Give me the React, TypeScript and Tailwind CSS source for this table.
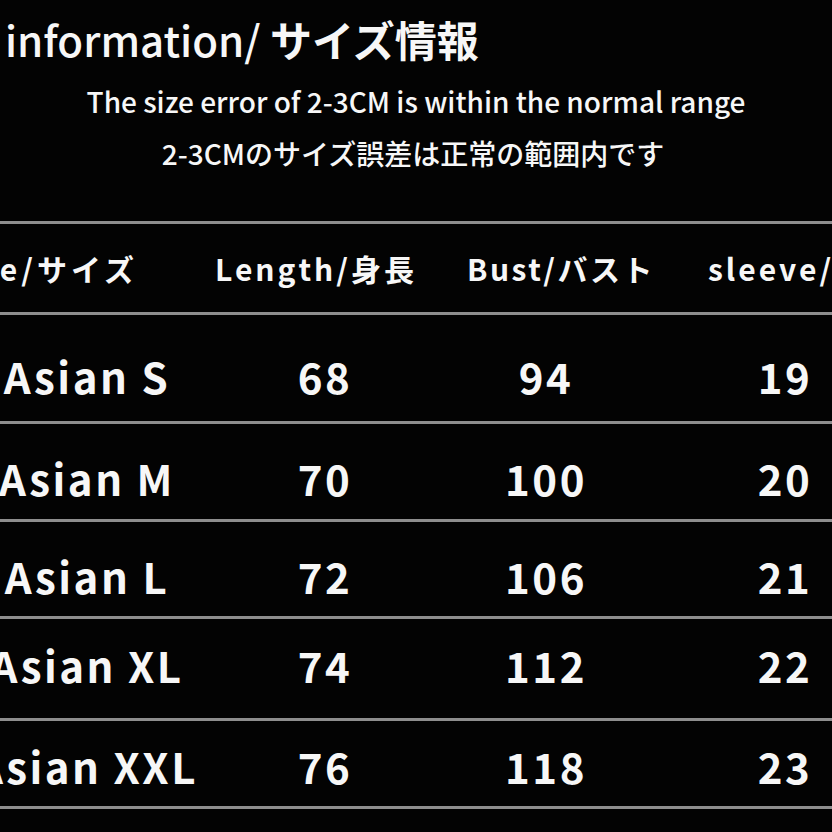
import React from "react";

interface SizeRow {
  size: string;
  length: string;
  bust: string;
  sleeve: string;
  rowClass: string;
}

// 写真の歪みに合わせて行ごとに高さと上余白を調整
const rows: SizeRow[] = [
  { size: "Asian S", length: "68", bust: "94", sleeve: "19", rowClass: "h-[106px] pt-[40px]" },
  { size: "Asian M", length: "70", bust: "100", sleeve: "20", rowClass: "h-[95px] pt-[33px]" },
  { size: "Asian L", length: "72", bust: "106", sleeve: "21", rowClass: "h-[94px] pt-[33px]" },
  { size: "Asian XL", length: "74", bust: "112", sleeve: "22", rowClass: "h-[99px] pt-[25px]" },
  { size: "Asian XXL", length: "76", bust: "118", sleeve: "23", rowClass: "h-[85px] pt-[24px]" },
];

function Rule() {
  return <div className="h-[3px] w-full bg-[#8e8e8e]" />;
}

export default function App() {
  return (
    <div className="w-[832px] h-[832px] overflow-hidden bg-[#030303] text-[#f7f7f7] font-['Noto_Sans_CJK_JP','Noto_Sans',sans-serif]">
      {/* タイトル */}
      <h1 className="mt-[18px] pl-[5px] text-[42px] leading-[42px] whitespace-nowrap">
        <span className="font-medium">information/ </span>
        <span className="font-bold">サイズ情報</span>
      </h1>

      {/* 注意書き */}
      <p className="mt-[26px] text-center text-[28px] leading-[30px] font-medium whitespace-nowrap">
        The size error of 2-3CM is within the normal range
      </p>
      <p className="mt-[22px] pr-[6px] text-center text-[28px] leading-[30px] font-medium whitespace-nowrap">
        2-3CMのサイズ誤差は正常の範囲内です
      </p>

      {/* サイズ表 */}
      <div className="mt-[53px] ml-[-40px] w-[960px]">
        <Rule />
        <div className="flex h-[88px] pt-[28px] text-[30px] leading-[32px] font-bold tracking-[3px] whitespace-nowrap">
          <div className="w-[178px] shrink-0 flex justify-end tracking-[4px]">
            <span className="shrink-0">Size/サイズ</span>
          </div>
          <div className="w-[249px] shrink-0 pl-[77px]">Length/身長</div>
          <div className="w-[241px] shrink-0 pl-[80px] tracking-[2.5px]">Bust/バスト</div>
          <div className="shrink-0 pl-[80px]">sleeve/袖丈</div>
        </div>
        <Rule />
        {rows.map((r) => (
          <React.Fragment key={r.size}>
            <div
              className={`grid grid-cols-[254px_222px_220px_258px] text-[42px] leading-[42px] font-bold tracking-[2.5px] text-center whitespace-nowrap ${r.rowClass}`}
            >
              <div>{r.size}</div>
              <div>{r.length}</div>
              <div>{r.bust}</div>
              <div>{r.sleeve}</div>
            </div>
            <Rule />
          </React.Fragment>
        ))}
      </div>
    </div>
  );
}
